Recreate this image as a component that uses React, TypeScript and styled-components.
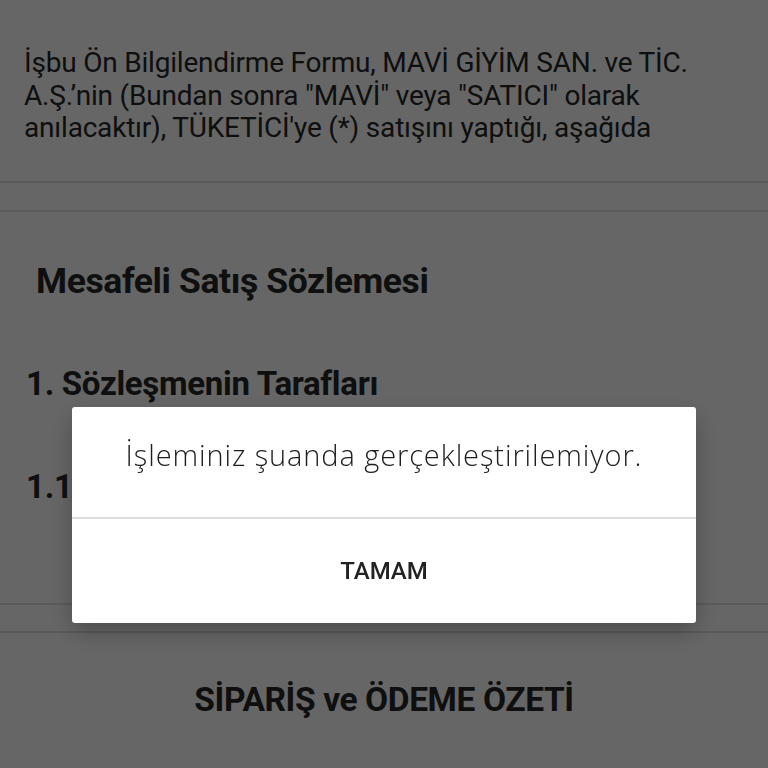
import React from "react";
import styled, { createGlobalStyle } from "styled-components";

const GlobalStyle = createGlobalStyle`
  html, body {
    margin: 0;
    padding: 0;
    background: #ffffff;
  }
  body {
    font-family: Roboto, "Liberation Sans", sans-serif;
    color: #262626;
    overflow: hidden;
  }
`;

const Page = styled.div`
  width: 768px;
  height: 768px;
  display: flex;
  flex-direction: column;
  background: #ffffff;
  overflow: hidden;
`;

const Intro = styled.p`
  margin: 0;
  padding: 47px 24px 0;
  height: 181px;
  box-sizing: border-box;
  font-size: 28px;
  line-height: 32.5px;
  letter-spacing: -0.2px;
  white-space: nowrap;
  flex-shrink: 0;
`;

const Divider = styled.div<{ $gap: number }>`
  height: ${({ $gap }) => $gap}px;
  border-top: 2px solid #e2e2e2;
  border-bottom: 2px solid #e2e2e2;
  box-sizing: border-box;
  flex-shrink: 0;
`;

const Contract = styled.section`
  display: flex;
  flex-direction: column;
  height: 391px;
  box-sizing: border-box;
  padding-top: 47px;
  flex-shrink: 0;
`;

const Title = styled.h2`
  margin: 0 0 0 36px;
  font-size: 35.5px;
  line-height: 44px;
  font-weight: 700;
  letter-spacing: -0.4px;
`;

const SectionHeading = styled.h3<{ $top: number }>`
  margin: ${({ $top }) => $top}px 0 0 26px;
  font-size: 33px;
  line-height: 40px;
  font-weight: 700;
  letter-spacing: -0.3px;
`;

const Summary = styled.h2`
  margin: 0;
  padding-top: 47px;
  text-align: center;
  font-size: 33.5px;
  line-height: 40px;
  font-weight: 700;
  letter-spacing: -0.4px;
`;

const Overlay = styled.div`
  position: fixed;
  inset: 0;
  background: rgba(0, 0, 0, 0.6);
  display: flex;
  justify-content: center;
  align-items: flex-start;
  padding-top: 407px;
  box-sizing: border-box;
`;

const Dialog = styled.div`
  width: 624px;
  background: #ffffff;
  border-radius: 3px;
  box-shadow: 0 10px 24px rgba(0, 0, 0, 0.25);
  display: flex;
  flex-direction: column;
  overflow: hidden;
`;

const Message = styled.div`
  height: 112px;
  box-sizing: border-box;
  padding-top: 28px;
  text-align: center;
  font-family: "Open Sans", "Noto Sans", sans-serif;
  font-weight: 300;
  font-size: 29px;
  line-height: 40px;
  letter-spacing: 0.9px;
  color: #1e1e1e;
  border-bottom: 2px solid #dedede;
`;

const OkButton = styled.button`
  all: unset;
  height: 104px;
  display: flex;
  align-items: center;
  justify-content: center;
  font-family: Roboto, "Liberation Sans", sans-serif;
  font-weight: 500;
  font-size: 24px;
  color: #222222;
  cursor: pointer;
`;

export default function App() {
  return (
    <>
      <GlobalStyle />
      <Page>
        <Intro>
          İşbu Ön Bilgilendirme Formu, MAVİ GİYİM SAN. ve TİC.
          <br />
          A.Ş.’nin (Bundan sonra "MAVİ" veya "SATICI" olarak
          <br />
          anılacaktır), TÜKETİCİ'ye (*) satışını yaptığı, aşağıda
        </Intro>
        <Divider $gap={31} />
        <Contract>
          <Title>Mesafeli Satış Sözlemesi</Title>
          <SectionHeading $top={61}>1. Sözleşmenin Tarafları</SectionHeading>
          <SectionHeading $top={63}>1.1</SectionHeading>
        </Contract>
        <Divider $gap={30} />
        <Summary>SİPARİŞ ve ÖDEME ÖZETİ</Summary>
      </Page>
      <Overlay>
        <Dialog>
          <Message>İşleminiz şuanda gerçekleştirilemiyor.</Message>
          <OkButton>TAMAM</OkButton>
        </Dialog>
      </Overlay>
    </>
  );
}
